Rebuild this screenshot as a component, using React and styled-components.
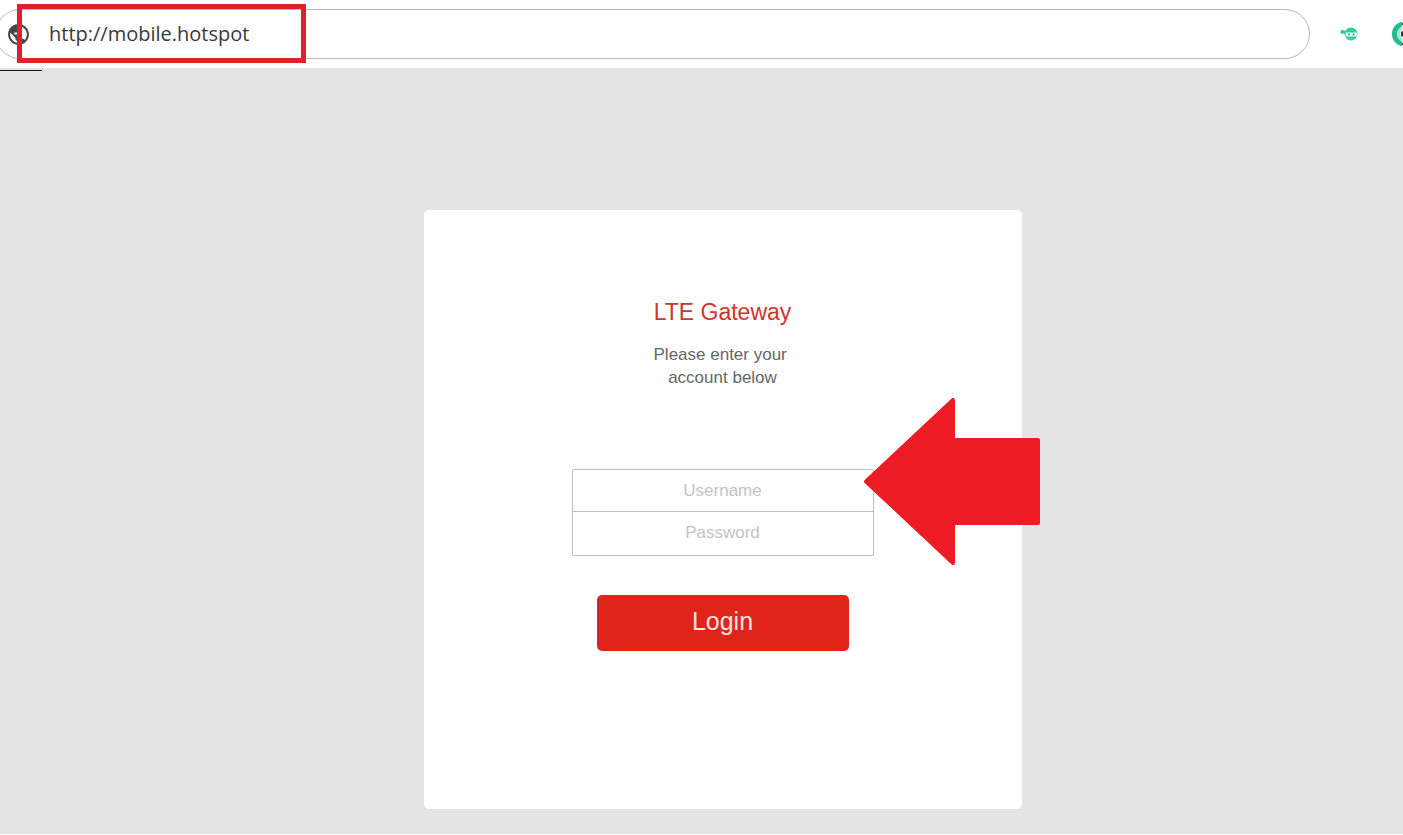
import React from 'react'
import styled, { createGlobalStyle } from 'styled-components'
import { MdPublic } from 'react-icons/md'

const GlobalStyle = createGlobalStyle`
  * {
    box-sizing: border-box;
  }

  body {
    margin: 0;
    background: #fff;
    font-family: 'Liberation Sans', Arial, sans-serif;
    overflow: hidden;
  }
`

const Page = styled.div`
  display: flex;
  flex-direction: column;
  height: 100vh;
  padding-bottom: 1px;
`

const Toolbar = styled.header`
  display: flex;
  align-items: center;
  height: 68px;
  flex-shrink: 0;
  overflow: hidden;
`

const AddressBar = styled.div`
  position: relative;
  display: flex;
  align-items: center;
  flex: 1;
  height: 50px;
  margin-left: -5px;
  padding-left: 10px;
  border: 1px solid #b8b8b8;
  border-radius: 25px;
`

const AddressInput = styled.input`
  flex: 1;
  height: 28px;
  margin-left: 18px;
  padding: 0;
  border: 0;
  outline: 0;
  background: transparent;
  color: #3a3a3a;
  font-family: 'Open Sans', 'Noto Sans', sans-serif;
  font-size: 20px;
  line-height: 28px;
`

const Highlight = styled.div`
  position: absolute;
  left: 21px;
  top: -6px;
  width: 289px;
  height: 59px;
  border: 5px solid #dd222a;
  pointer-events: none;
`

const Extensions = styled.div`
  display: flex;
  align-items: center;
  gap: 32px;
  width: 93px;
  padding-left: 30px;
`

const ExtensionButton = styled.button`
  display: flex;
  flex-shrink: 0;
  padding: 0;
  border: 0;
  background: none;
`

const Main = styled.main`
  flex: 1;
  background: #e4e4e4;
`

const Line = styled.div`
  width: 42px;
  height: 1px;
  margin-top: 2px;
  background: #111;
`

const Content = styled.div`
  display: flex;
  justify-content: center;
  padding: 139px 0 0 42px;
`

const Card = styled.form`
  display: flex;
  flex-direction: column;
  align-items: center;
  width: 598px;
  padding: 88px 0 158px;
  border-radius: 5px;
  background: #fff;
`

const Title = styled.h1`
  margin: 0;
  color: #cf352e;
  font-size: 23px;
  font-weight: 400;
  line-height: 28px;
`

const Hint = styled.p`
  margin: 17px 0 0;
  color: #666;
  font-size: 17px;
  line-height: 23px;
  text-align: center;
  white-space: pre;
`

const Fields = styled.div`
  position: relative;
  width: 302px;
  margin-top: 80px;
  padding-bottom: 1px;
  border: 1px solid #bdbdbd;
  border-radius: 2px;
`

const Field = styled.input`
  display: block;
  width: 100%;
  height: 42px;
  padding: 0;
  border: 0;
  border-bottom: 1px solid ${props => (props.$divided ? '#bdbdbd' : 'transparent')};
  outline: 0;
  background: transparent;
  color: #555;
  font-family: inherit;
  font-size: 17px;
  text-align: center;

  &::placeholder {
    color: #c4c4c4;
    opacity: 1;
  }
`

const Arrow = styled.svg`
  position: absolute;
  left: 291px;
  top: -72px;
`

const LoginButton = styled.button`
  width: 252px;
  height: 56px;
  margin-top: 39px;
  padding: 0 0 4px;
  border: 0;
  border-radius: 5px;
  background: #e02419;
  color: #fbe3e1;
  font-family: inherit;
  font-size: 25px;
`

function NinjaIcon() {
  return (
    <svg width="19" height="14" viewBox="0 0 19 14" aria-hidden="true">
      <circle cx="11" cy="7" r="6.500" fill="#34cb9d" />
      <path d="M0 4.500 1.500 4 1 2.500 6 4v4L3 6.500 1 7z" fill="#34cb9d" />
      <rect x="5.500" y="5.500" width="11.500" height="4" rx="1" fill="#e9fff7" />
      <circle cx="9" cy="7.500" r="1" fill="#24a882" />
      <circle cx="13.500" cy="7.500" r="1" fill="#24a882" />
    </svg>
  )
}

function BadgeIcon() {
  return (
    <svg width="24" height="24" viewBox="0 0 24 24" aria-hidden="true">
      <path d="M9 1h15v22H9z" fill="#3b4144" />
      <path d="M9 3h15v18H9z" fill="#fff" />
      <path d="M10 1v3a9 9 0 0 0 0 16v3A11.500 11.500 0 0 1 10 1z" fill="#22bd93" stroke="#22bd93" strokeWidth="2" />
      <path d="M11 6a7 7 0 0 0 0 12" fill="none" stroke="#9fe8d3" strokeWidth="3" />
      <path d="M12 9l-2 1v4l2 1z" fill="#30383b" />
    </svg>
  )
}

export default function App() {
  return (
    <Page>
      <GlobalStyle />
      <Toolbar>
        <AddressBar>
          <MdPublic size={25} color="#46474b" />
          <AddressInput aria-label="Address" defaultValue="http://mobile.hotspot" spellCheck={false} />
          <Highlight />
        </AddressBar>
        <Extensions>
          <ExtensionButton type="button" aria-label="Ninja extension">
            <NinjaIcon />
          </ExtensionButton>
          <ExtensionButton type="button" aria-label="Extension">
            <BadgeIcon />
          </ExtensionButton>
        </Extensions>
      </Toolbar>
      <Main>
        <Line />
        <Content>
          <Card onSubmit={e => e.preventDefault()}>
            <Title>LTE Gateway</Title>
            <Hint>{'Please enter your \naccount below'}</Hint>
            <Fields>
              <Field $divided type="text" aria-label="Username" placeholder="Username" />
              <Field type="password" aria-label="Password" placeholder="Password" />
              <Arrow width="176" height="168" viewBox="0 0 176 168" aria-hidden="true">
                <path
                  d="M2 83.500 89 2v40h85v83H89v40z"
                  fill="#ed1c24"
                  stroke="#ed1c24"
                  strokeWidth="4"
                  strokeLinejoin="round"
                />
              </Arrow>
            </Fields>
            <LoginButton type="submit">Login</LoginButton>
          </Card>
        </Content>
      </Main>
    </Page>
  )
}
